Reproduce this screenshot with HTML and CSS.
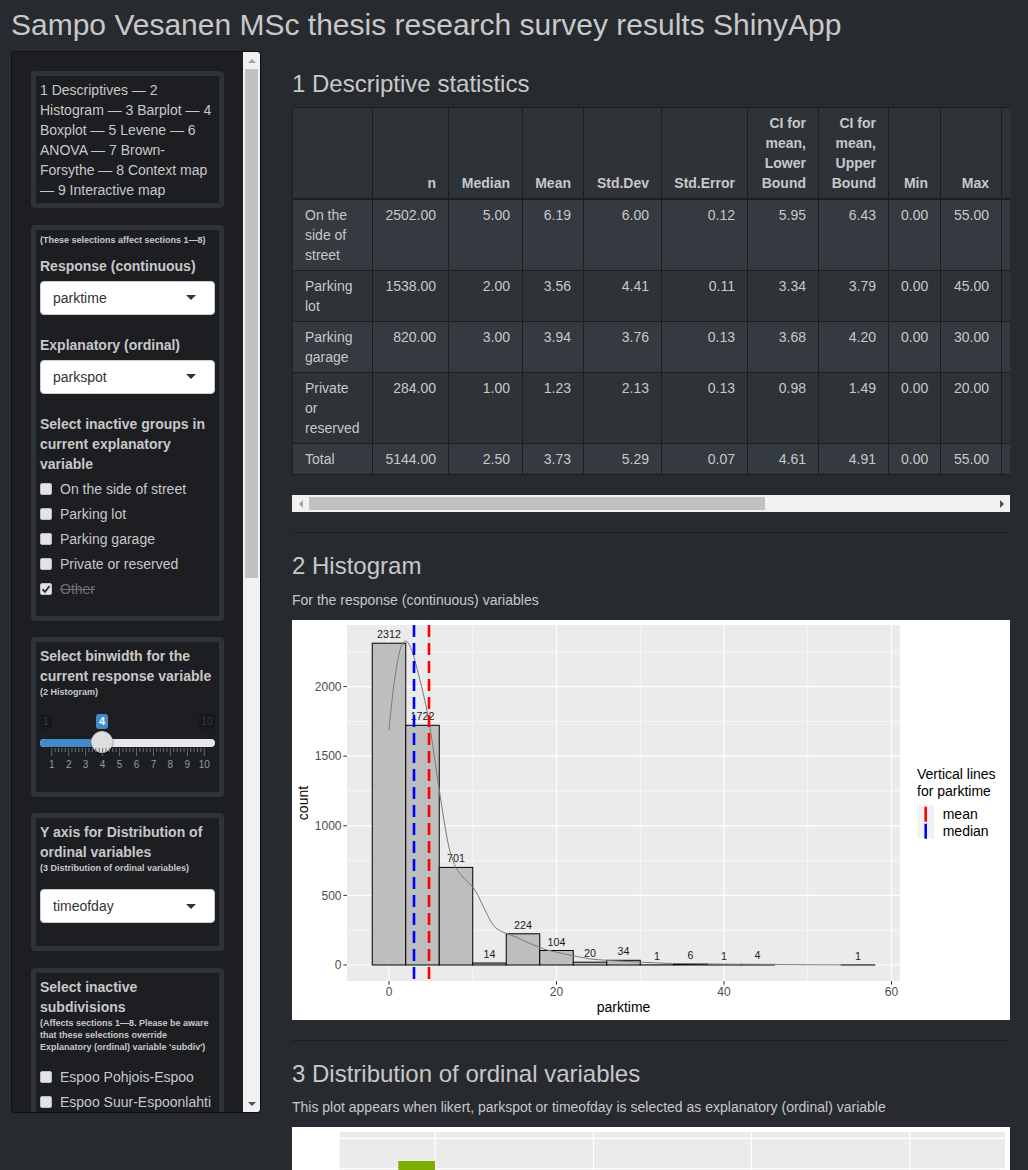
FILE: index.html
```html
<!DOCTYPE html>
<html lang="en">
<head>
<meta charset="utf-8">
<title>Sampo Vesanen MSc thesis research survey results ShinyApp</title>
<link rel="stylesheet" href="styles.css">
</head>
<body>
<div class="page">
  <h1 class="app-title">Sampo Vesanen MSc thesis research survey results ShinyApp</h1>
  <div class="layout">
    <aside class="sidebar">
      <div class="sidebar-content">
        <div class="wbox toc">1 Descriptives — 2 Histogram — 3 Barplot — 4 Boxplot — 5 Levene — 6 ANOVA — 7 Brown-Forsythe — 8 Context map — 9 Interactive map</div>

        <div class="wbox">
          <p class="note note-top">(These selections affect sections 1—8)</p>
          <div class="form-group">
            <label class="ctl-label">Response (continuous)</label>
            <div class="select"><span>parktime</span><span class="caret"></span></div>
          </div>
          <div class="form-group">
            <label class="ctl-label">Explanatory (ordinal)</label>
            <div class="select"><span>parkspot</span><span class="caret"></span></div>
          </div>
          <div class="ctl-label">Select inactive groups in current explanatory variable</div>
          <div class="cb-list cb-list-groups">
            <label class="cb-row"><span class="cb"></span><span>On the side of street</span></label>
            <label class="cb-row"><span class="cb"></span><span>Parking lot</span></label>
            <label class="cb-row"><span class="cb"></span><span>Parking garage</span></label>
            <label class="cb-row"><span class="cb"></span><span>Private or reserved</span></label>
            <label class="cb-row"><span class="cb"><svg viewBox="0 0 12 12" width="12" height="12"><polyline points="2.5,6.2 5,8.8 9.6,3" fill="none" stroke="#333" stroke-width="2"/></svg></span><span class="off-text">Other</span></label>
          </div>
        </div>

        <div class="wbox">
          <div class="ctl-label">Select binwidth for the current response variable</div>
          <p class="note">(2 Histogram)</p>
          <div class="slider">
            <span class="irs-min">1</span>
            <span class="irs-max">10</span>
            <span class="irs-single">4</span>
            <span class="irs-line"></span>
            <span class="irs-bar"></span>
            <span class="irs-handle"></span>
            <svg class="irs-grid" viewBox="0 0 175 28" width="175" height="28">
              <g stroke="#6b7077" stroke-width="1">
                <line x1="15.1" y1="1" x2="15.1" y2="5"/><line x1="18.5" y1="1" x2="18.5" y2="5"/><line x1="21.9" y1="1" x2="21.9" y2="5"/><line x1="25.3" y1="1" x2="25.3" y2="5"/>
                <line x1="32.0" y1="1" x2="32.0" y2="5"/><line x1="35.4" y1="1" x2="35.4" y2="5"/><line x1="38.8" y1="1" x2="38.8" y2="5"/><line x1="42.2" y1="1" x2="42.2" y2="5"/>
                <line x1="49.0" y1="1" x2="49.0" y2="5"/><line x1="52.4" y1="1" x2="52.4" y2="5"/><line x1="55.8" y1="1" x2="55.8" y2="5"/><line x1="59.2" y1="1" x2="59.2" y2="5"/>
                <line x1="65.9" y1="1" x2="65.9" y2="5"/><line x1="69.3" y1="1" x2="69.3" y2="5"/><line x1="72.7" y1="1" x2="72.7" y2="5"/><line x1="76.1" y1="1" x2="76.1" y2="5"/>
                <line x1="82.9" y1="1" x2="82.9" y2="5"/><line x1="86.3" y1="1" x2="86.3" y2="5"/><line x1="89.7" y1="1" x2="89.7" y2="5"/><line x1="93.1" y1="1" x2="93.1" y2="5"/>
                <line x1="99.9" y1="1" x2="99.9" y2="5"/><line x1="103.3" y1="1" x2="103.3" y2="5"/><line x1="106.7" y1="1" x2="106.7" y2="5"/><line x1="110.1" y1="1" x2="110.1" y2="5"/>
                <line x1="116.8" y1="1" x2="116.8" y2="5"/><line x1="120.2" y1="1" x2="120.2" y2="5"/><line x1="123.6" y1="1" x2="123.6" y2="5"/><line x1="127.0" y1="1" x2="127.0" y2="5"/>
                <line x1="133.8" y1="1" x2="133.8" y2="5"/><line x1="137.2" y1="1" x2="137.2" y2="5"/><line x1="140.6" y1="1" x2="140.6" y2="5"/><line x1="144.0" y1="1" x2="144.0" y2="5"/>
                <line x1="150.7" y1="1" x2="150.7" y2="5"/><line x1="154.1" y1="1" x2="154.1" y2="5"/><line x1="157.5" y1="1" x2="157.5" y2="5"/><line x1="160.9" y1="1" x2="160.9" y2="5"/>
              </g>
              <g stroke="#3f6f9f" stroke-width="1">
                <line x1="11.7" y1="1" x2="11.7" y2="9"/><line x1="28.7" y1="1" x2="28.7" y2="9"/><line x1="45.6" y1="1" x2="45.6" y2="9"/><line x1="62.6" y1="1" x2="62.6" y2="9"/><line x1="79.5" y1="1" x2="79.5" y2="9"/>
                <line x1="96.5" y1="1" x2="96.5" y2="9"/><line x1="113.5" y1="1" x2="113.5" y2="9"/><line x1="130.4" y1="1" x2="130.4" y2="9"/><line x1="147.4" y1="1" x2="147.4" y2="9"/><line x1="164.3" y1="1" x2="164.3" y2="9"/>
              </g>
              <g fill="#999" font-size="10" text-anchor="middle">
                <text x="11.7" y="20.5">1</text><text x="28.7" y="20.5">2</text><text x="45.6" y="20.5">3</text><text x="62.6" y="20.5">4</text><text x="79.5" y="20.5">5</text>
                <text x="96.5" y="20.5">6</text><text x="113.5" y="20.5">7</text><text x="130.4" y="20.5">8</text><text x="147.4" y="20.5">9</text><text x="164.3" y="20.5">10</text>
              </g>
            </svg>
          </div>
        </div>

        <div class="wbox">
          <div class="ctl-label">Y axis for Distribution of ordinal variables</div>
          <p class="note">(3 Distribution of ordinal variables)</p>
          <div class="select select-spaced"><span>timeofday</span><span class="caret"></span></div>
        </div>

        <div class="wbox">
          <div class="ctl-label">Select inactive subdivisions</div>
          <p class="note">(Affects sections 1—8. Please be aware that these selections override Explanatory (ordinal) variable 'subdiv')</p>
          <div class="cb-list cb-list-subdiv">
            <label class="cb-row"><span class="cb"></span><span>Espoo Pohjois-Espoo</span></label>
            <label class="cb-row"><span class="cb"></span><span>Espoo Suur-Espoonlahti</span></label>
            <label class="cb-row"><span class="cb"></span><span>Espoo Suur-Kauklahti</span></label>
            <label class="cb-row"><span class="cb"></span><span>Espoo Suur-Leppävaara</span></label>
            <label class="cb-row"><span class="cb"></span><span>Espoo Suur-Matinkylä</span></label>
          </div>
        </div>
      </div>
      <div class="vscroll">
        <span class="sb-btn"><span class="arr arr-up"></span></span>
        <span class="sb-thumb-v"></span>
        <span class="sb-fill"></span>
        <span class="sb-btn"><span class="arr arr-down"></span></span>
      </div>
    </aside>

    <main class="main">
      <h3 class="sec-title">1 Descriptive statistics</h3>
      <div class="table-scroll">
        <table class="stats">
          <thead>
            <tr>
              <th></th><th>n</th><th>Median</th><th>Mean</th><th>Std.Dev</th><th>Std.Error</th>
              <th>CI for mean, Lower Bound</th><th>CI for mean, Upper Bound</th><th>Min</th><th>Max</th><th>Range</th>
            </tr>
          </thead>
          <tbody>
            <tr><td>On the side of street</td><td>2502.00</td><td>5.00</td><td>6.19</td><td>6.00</td><td>0.12</td><td>5.95</td><td>6.43</td><td>0.00</td><td>55.00</td><td>55.00</td></tr>
            <tr><td>Parking lot</td><td>1538.00</td><td>2.00</td><td>3.56</td><td>4.41</td><td>0.11</td><td>3.34</td><td>3.79</td><td>0.00</td><td>45.00</td><td>45.00</td></tr>
            <tr><td>Parking garage</td><td>820.00</td><td>3.00</td><td>3.94</td><td>3.76</td><td>0.13</td><td>3.68</td><td>4.20</td><td>0.00</td><td>30.00</td><td>30.00</td></tr>
            <tr><td>Private or reserved</td><td>284.00</td><td>1.00</td><td>1.23</td><td>2.13</td><td>0.13</td><td>0.98</td><td>1.49</td><td>0.00</td><td>20.00</td><td>20.00</td></tr>
            <tr><td>Total</td><td>5144.00</td><td>2.50</td><td>3.73</td><td>5.29</td><td>0.07</td><td>4.61</td><td>4.91</td><td>0.00</td><td>55.00</td><td>55.00</td></tr>
          </tbody>
        </table>
      </div>
      <div class="hscroll">
        <span class="sb-btn-h"><span class="arr arr-left"></span></span>
        <span class="sb-thumb-h"></span>
        <span class="sb-fill"></span>
        <span class="sb-btn-h"><span class="arr arr-right"></span></span>
      </div>

      <hr class="sep">

      <h3 class="sec-title">2 Histogram</h3>
      <p class="sec-text">For the response (continuous) variables</p>
      <div class="plot">
        <svg class="plot-svg" viewBox="0 0 718 400" width="718" height="400">
          <rect x="55" y="5" width="553" height="356" fill="#ebebeb"/>
          <g stroke="#ffffff" stroke-width="0.6">
            <line x1="55" y1="310.2" x2="608" y2="310.2"/><line x1="55" y1="240.6" x2="608" y2="240.6"/><line x1="55" y1="171" x2="608" y2="171"/><line x1="55" y1="101.4" x2="608" y2="101.4"/><line x1="55" y1="31.8" x2="608" y2="31.8"/>
            <line x1="180.75" y1="5" x2="180.75" y2="361"/><line x1="348.25" y1="5" x2="348.25" y2="361"/><line x1="515.75" y1="5" x2="515.75" y2="361"/>
          </g>
          <g stroke="#ffffff" stroke-width="1.2">
            <line x1="55" y1="345" x2="608" y2="345"/><line x1="55" y1="275.4" x2="608" y2="275.4"/><line x1="55" y1="205.8" x2="608" y2="205.8"/><line x1="55" y1="136.2" x2="608" y2="136.2"/><line x1="55" y1="66.6" x2="608" y2="66.6"/>
            <line x1="97" y1="5" x2="97" y2="361"/><line x1="264.5" y1="5" x2="264.5" y2="361"/><line x1="432" y1="5" x2="432" y2="361"/><line x1="599.5" y1="5" x2="599.5" y2="361"/>
          </g>
          <g fill="#bebebe" stroke="#000" stroke-width="1">
            <rect x="80.25" y="23.2" width="33.5" height="321.8"/>
            <rect x="113.75" y="105.3" width="33.5" height="239.7"/>
            <rect x="147.25" y="247.4" width="33.5" height="97.6"/>
            <rect x="180.75" y="343.05" width="33.5" height="1.95"/>
            <rect x="214.25" y="313.8" width="33.5" height="31.2"/>
            <rect x="247.75" y="330.5" width="33.5" height="14.5"/>
            <rect x="281.25" y="342.2" width="33.5" height="2.8"/>
            <rect x="314.75" y="340.3" width="33.5" height="4.7"/>
            <rect x="348.25" y="344.86" width="33.5" height="0.14"/>
            <rect x="381.75" y="344.16" width="33.5" height="0.84"/>
            <rect x="415.25" y="344.86" width="33.5" height="0.14"/>
            <rect x="448.75" y="344.44" width="33.5" height="0.56"/>
            <rect x="482.25" y="345" width="33.5" height="0"/>
            <rect x="515.75" y="345" width="33.5" height="0"/>
            <rect x="549.25" y="344.86" width="33.5" height="0.14"/>
          </g>
          <g fill="#1a1a1a" font-size="10.7" text-anchor="middle">
            <text x="97" y="18.2">2312</text>
            <text x="130.5" y="100.3">1722</text>
            <text x="164" y="242.4">701</text>
            <text x="197.5" y="338">14</text>
            <text x="231" y="308.8">224</text>
            <text x="264.5" y="325.5">104</text>
            <text x="298" y="337.2">20</text>
            <text x="331.5" y="335.3">34</text>
            <text x="365" y="339.9">1</text>
            <text x="398.5" y="339.2">6</text>
            <text x="432" y="339.9">1</text>
            <text x="465.5" y="339.4">4</text>
            <text x="566" y="339.9">1</text>
          </g>
          <path d="M97,110 C100,78 104,44 108,30 C110,23 112,21 113.7,21 C116,21 119,27 122,37 C126,52 130,68 133,81 C137,100 140,120 143,141 C147,168 151,196 154.7,216 C157,230 161,244 166,251 C171,258 176,262 180,266 C185,272 189,282 193,290 C197,298 200,305 205,309 C211,313 217,314 224,317 C234,322 244,326 255,330 C268,333 282,336 298,339 C320,341 345,342 373,343.3 C420,344.2 500,344.8 582,345" fill="none" stroke="#7a7a7a" stroke-width="1"/>
          <line x1="122" y1="5" x2="122" y2="361" stroke="#0000ff" stroke-width="2.6" stroke-dasharray="12 6"/>
          <line x1="137" y1="5" x2="137" y2="361" stroke="#ff0000" stroke-width="2.6" stroke-dasharray="12 6"/>
          <g stroke="#333" stroke-width="1">
            <line x1="51.3" y1="345" x2="55" y2="345"/><line x1="51.3" y1="275.4" x2="55" y2="275.4"/><line x1="51.3" y1="205.8" x2="55" y2="205.8"/><line x1="51.3" y1="136.2" x2="55" y2="136.2"/><line x1="51.3" y1="66.6" x2="55" y2="66.6"/>
            <line x1="97" y1="361" x2="97" y2="364.7"/><line x1="264.5" y1="361" x2="264.5" y2="364.7"/><line x1="432" y1="361" x2="432" y2="364.7"/><line x1="599.5" y1="361" x2="599.5" y2="364.7"/>
          </g>
          <g fill="#4d4d4d" font-size="12">
            <text x="49.5" y="349.2" text-anchor="end">0</text>
            <text x="49.5" y="279.6" text-anchor="end">500</text>
            <text x="49.5" y="210" text-anchor="end">1000</text>
            <text x="49.5" y="140.4" text-anchor="end">1500</text>
            <text x="49.5" y="70.8" text-anchor="end">2000</text>
            <text x="97" y="375.5" text-anchor="middle">0</text>
            <text x="264.5" y="375.5" text-anchor="middle">20</text>
            <text x="432" y="375.5" text-anchor="middle">40</text>
            <text x="599.5" y="375.5" text-anchor="middle">60</text>
          </g>
          <text x="331.5" y="392" font-size="14" fill="#000" text-anchor="middle">parktime</text>
          <text x="0" y="0" font-size="14" fill="#000" text-anchor="middle" transform="translate(16 183) rotate(-90)">count</text>
          <g font-size="14" fill="#000">
            <text x="625" y="159">Vertical lines</text>
            <text x="625" y="176">for parktime</text>
            <rect x="625.3" y="185" width="16.7" height="33.7" fill="#f2f2f2"/>
            <line x1="633.7" y1="186.7" x2="633.7" y2="201.7" stroke="#ff0000" stroke-width="2.6"/>
            <line x1="633.7" y1="203.7" x2="633.7" y2="218.7" stroke="#0000ff" stroke-width="2.6"/>
            <text x="650.7" y="198.7">mean</text>
            <text x="650.7" y="216">median</text>
          </g>
        </svg>
      </div>

      <hr class="sep">

      <h3 class="sec-title">3 Distribution of ordinal variables</h3>
      <p class="sec-text">This plot appears when likert, parkspot or timeofday is selected as explanatory (ordinal) variable</p>
      <div class="plot">
        <svg class="plot-svg" viewBox="0 0 718 400" width="718" height="400">
          <rect x="47.6" y="5" width="665.4" height="330" fill="#ebebeb"/>
          <g stroke="#ffffff" stroke-width="1.2">
            <line x1="47.6" y1="11.3" x2="713" y2="11.3"/><line x1="47.6" y1="41.7" x2="713" y2="41.7"/><line x1="47.6" y1="102.5" x2="713" y2="102.5"/><line x1="47.6" y1="163.3" x2="713" y2="163.3"/><line x1="47.6" y1="224.1" x2="713" y2="224.1"/><line x1="47.6" y1="284.9" x2="713" y2="284.9"/>
            <line x1="143" y1="5" x2="143" y2="335"/><line x1="301.5" y1="5" x2="301.5" y2="335"/><line x1="459.4" y1="5" x2="459.4" y2="335"/><line x1="617.8" y1="5" x2="617.8" y2="335"/>
          </g>
          <rect x="106.3" y="34" width="36.7" height="301" fill="#7cae00"/>
        </svg>
      </div>
    </main>
  </div>
</div>
</body>
</html>
```

FILE: styles.css
```css
html, body {
  margin: 0;
  padding: 0;
  overflow: hidden;
  background: #272b30;
}

body {
  font-family: "Liberation Sans", Arial, Helvetica, sans-serif;
  font-size: 14px;
  line-height: 20px;
  color: #c8c8c8;
}

.page {
  padding-left: 11px;
}

.app-title {
  font-size: 30px;
  line-height: 33px;
  font-weight: 400;
  margin: 8px 0 10px;
  color: #c8c8c8;
}

.layout {
  display: flex;
  align-items: flex-start;
  gap: 31px;
}

/* ---------- sidebar ---------- */
.sidebar {
  box-sizing: border-box;
  flex: none;
  display: flex;
  width: 250px;
  height: 1062px;
  overflow: hidden;
  background: #1c1e22;
  border: 1px solid #0c0d0e;
  border-radius: 4px;
}

.sidebar-content {
  flex: 1;
  min-width: 0;
  padding: 19px;
  overflow: hidden;
}

/* classic scrollbars drawn as elements */
.vscroll {
  flex: none;
  width: 17px;
  display: flex;
  flex-direction: column;
  background: #f1f1f1;
}

.sb-btn {
  flex: none;
  height: 17px;
  display: flex;
  align-items: center;
  justify-content: center;
}

.sb-thumb-v {
  flex: none;
  height: 509px;
  margin: 0 2px;
  background: #c1c1c1;
}

.sb-fill {
  flex: 1;
}

.hscroll {
  display: flex;
  height: 17px;
  background: #f1f1f1;
}

.sb-btn-h {
  flex: none;
  width: 17px;
  display: flex;
  align-items: center;
  justify-content: center;
}

.sb-thumb-h {
  flex: none;
  width: 456px;
  margin: 2px 0;
  background: #c1c1c1;
}

.arr {
  width: 0;
  height: 0;
}

.arr-up {
  border-left: 4px solid transparent;
  border-right: 4px solid transparent;
  border-bottom: 4px solid #a3a3a3;
}

.arr-down {
  border-left: 4px solid transparent;
  border-right: 4px solid transparent;
  border-top: 4px solid #505050;
}

.arr-left {
  border-top: 4px solid transparent;
  border-bottom: 4px solid transparent;
  border-right: 4px solid #a3a3a3;
}

.arr-right {
  border-top: 4px solid transparent;
  border-bottom: 4px solid transparent;
  border-left: 4px solid #505050;
}

.wbox {
  border: 5px solid #2e3338;
  border-radius: 4px;
  padding: 4px;
  margin-bottom: 16.5px;
}

.toc {
  padding-bottom: 3px;
}

.note {
  margin: 0;
  font-size: 9px;
  line-height: 12px;
  font-weight: bold;
}

.note-top {
  margin-bottom: 10px;
}

.ctl-label {
  display: block;
  font-weight: bold;
  font-size: 14px;
  line-height: 20px;
}

.form-group {
  margin-bottom: 20px;
}

.form-group .ctl-label {
  margin-bottom: 5px;
}

.select {
  box-sizing: border-box;
  height: 34px;
  display: flex;
  align-items: center;
  justify-content: space-between;
  background: #ffffff;
  border: 1px solid #cccccc;
  border-radius: 4px;
  padding: 0 12px;
  color: #333333;
  font-size: 14px;
}

.select-spaced {
  margin-top: 15px;
  margin-bottom: 19px;
}

.caret {
  width: 0;
  height: 0;
  border-left: 5px solid transparent;
  border-right: 5px solid transparent;
  border-top: 5px solid #333333;
  margin-right: 6px;
}

.cb-list {
  display: flex;
  flex-direction: column;
  gap: 5px;
}

.cb-list-groups {
  margin-top: 5px;
  margin-bottom: 13px;
}

.cb-list-subdiv {
  margin-top: 14px;
  margin-bottom: 13px;
}

.cb-row {
  display: flex;
  align-items: center;
  gap: 8px;
  height: 20px;
  white-space: nowrap;
}

.cb {
  box-sizing: border-box;
  flex: none;
  width: 12px;
  height: 12px;
  background: #e4e4e4;
  border: 1px solid #bdbdbd;
  border-radius: 2px;
  display: flex;
}

.cb svg {
  display: block;
  margin: -1px;
}

.off-text {
  color: #6f6f6f;
  text-decoration: line-through;
}

/* slider widget */
.slider {
  position: relative;
  height: 75px;
  margin: 2.5px 0 12px;
}

.irs-min,
.irs-max,
.irs-single {
  position: absolute;
  top: 13px;
  height: 15px;
  line-height: 15px;
  text-align: center;
  font-size: 10px;
  border-radius: 2px;
}

.irs-min {
  left: 0;
  width: 12px;
  background: #17181b;
  color: #393c41;
}

.irs-max {
  right: 0;
  width: 16px;
  background: #17181b;
  color: #393c41;
}

.irs-single {
  left: 56px;
  width: 12px;
  background: #428bca;
  color: #ffffff;
  font-weight: bold;
  font-size: 11px;
  border-radius: 3px;
}

.irs-line {
  position: absolute;
  left: 0;
  right: 0;
  top: 38px;
  height: 8px;
  background: #e8e8e8;
  border-radius: 4px;
}

.irs-bar {
  position: absolute;
  left: 0;
  width: 62px;
  top: 38px;
  height: 8px;
  background: #428bca;
  border-radius: 4px 0 0 4px;
}

.irs-handle {
  position: absolute;
  box-sizing: border-box;
  left: 50.7px;
  top: 30px;
  width: 22px;
  height: 22px;
  border-radius: 50%;
  background: #dedede;
  border: 1px solid #cfcfcf;
  box-shadow: 0 1px 2px rgba(0, 0, 0, 0.4);
}

.irs-grid {
  position: absolute;
  left: 0;
  top: 46px;
  font-family: "Liberation Sans", Arial, sans-serif;
}

/* ---------- main ---------- */
.main {
  flex: none;
  width: 718px;
}

.sec-title {
  font-size: 24px;
  line-height: 26.4px;
  font-weight: 400;
  margin: 20px 0 10px;
  color: #c8c8c8;
}

.sec-text {
  margin: 0 0 10px;
}

.table-scroll {
  overflow: hidden;
}

.stats {
  table-layout: fixed;
  width: 1px;
  border-collapse: collapse;
  margin-bottom: 20px;
  background: #2e3338;
}

.stats th,
.stats td {
  border: 1px solid #1c1e22;
  padding: 5px 12px;
  text-align: right;
  vertical-align: top;
  background: #2e3338;
}

.stats th {
  vertical-align: bottom;
  font-weight: bold;
  border-bottom-width: 2px;
}

.stats th:first-child,
.stats td:first-child {
  text-align: left;
}

.stats th:nth-child(1) { width: 55px; }
.stats th:nth-child(2) { width: 51px; }
.stats th:nth-child(3) { width: 49px; }
.stats th:nth-child(4) { width: 36px; }
.stats th:nth-child(5) { width: 53px; }
.stats th:nth-child(6) { width: 61px; }
.stats th:nth-child(7) { width: 46px; }
.stats th:nth-child(8) { width: 45px; }
.stats th:nth-child(9) { width: 27px; }
.stats th:nth-child(10) { width: 36px; }
.stats th:nth-child(11) { width: 50px; }

.stats tbody tr:nth-child(odd) td {
  background: #353a41;
}

.sep {
  margin: 20px 0;
  border: 0;
  border-top: 1px solid #1c1e22;
  height: 0;
}

.plot {
  width: 718px;
  height: 400px;
  background: #ffffff;
}

.plot-svg {
  display: block;
  font-family: "Liberation Sans", Arial, Helvetica, sans-serif;
}
```
